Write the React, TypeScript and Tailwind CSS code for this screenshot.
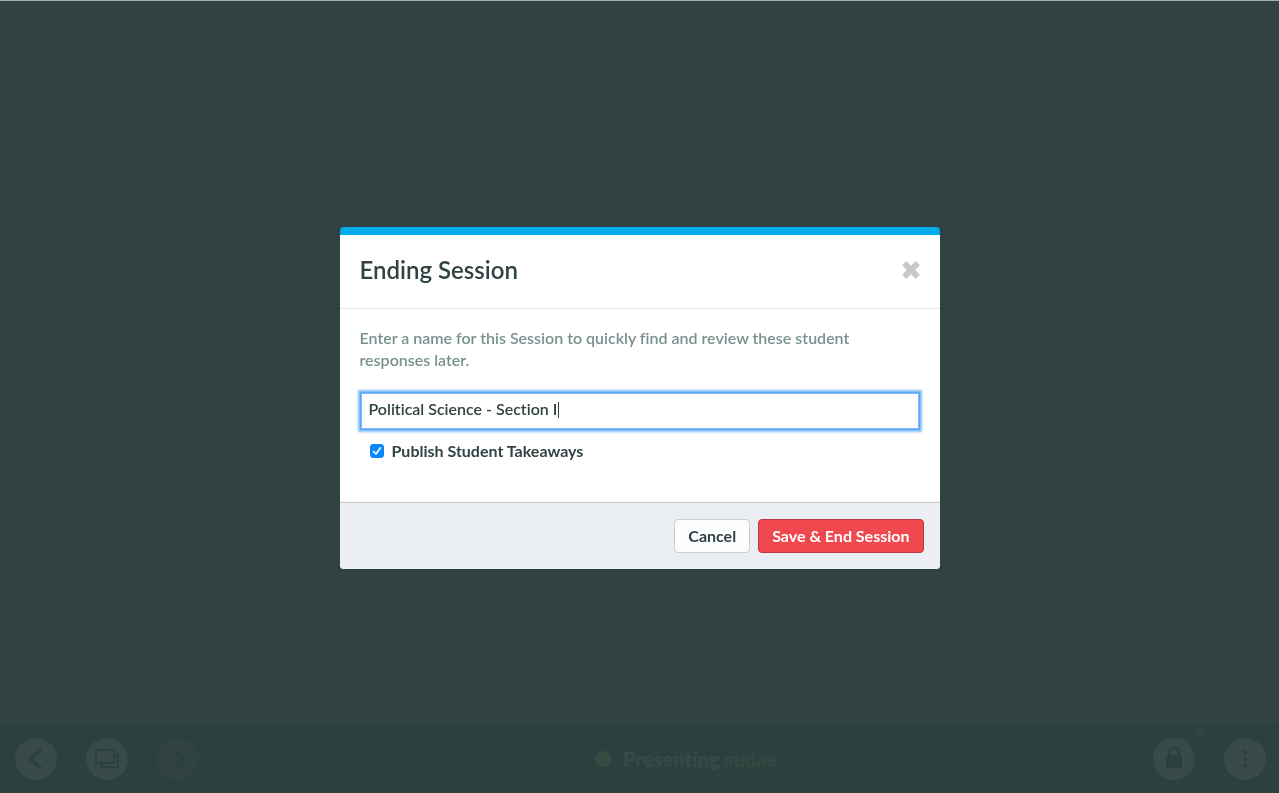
import { useState } from "react";
import type { ReactNode } from "react";

interface RoundButtonProps {
  label: string;
  disabled?: boolean;
  children: ReactNode;
}

function RoundButton({ label, disabled = false, children }: RoundButtonProps) {
  return (
    <button
      type="button"
      aria-label={label}
      disabled={disabled}
      className={`flex h-[42px] w-[42px] items-center justify-center rounded-full text-[#2d4040] ${
        disabled ? "bg-[#304242]" : "bg-[#394a4a]"
      }`}
    >
      {children}
    </button>
  );
}

function Chevron({ flip = false }: { flip?: boolean }) {
  return (
    <svg width="42" height="42" viewBox="0 0 42 42" fill="none" stroke="currentColor" strokeWidth="4" strokeLinecap="round" strokeLinejoin="round">
      <path d={flip ? "M18 12.5L27 21L18 29.5" : "M24.5 12.5L15.5 21L24.5 29.5"} />
    </svg>
  );
}

function PresenterBar() {
  return (
    <footer className="flex h-[69px] items-center justify-between bg-[#2d4040] pt-px pr-[13px] pl-[15px]">
      <div className="flex gap-[29px]">
        <RoundButton label="Previous slide">
          <Chevron />
        </RoundButton>
        <RoundButton label="All slides">
          <svg width="42" height="42" viewBox="0 0 42 42" fill="none" stroke="currentColor" strokeWidth="2">
            <rect x="10" y="12" width="18" height="13" />
            <path d="M28 17H32V29H15V25" />
          </svg>
        </RoundButton>
        <RoundButton label="Next slide" disabled>
          <Chevron flip />
        </RoundButton>
      </div>

      <div className="flex items-center gap-3 pb-px pl-5 text-xl font-extrabold text-[#374949]">
        <span className="h-4 w-4 rounded-full border-2 border-[#364a46] bg-[#374b40]" />
        <span>
          Presenting <span className="text-[#354840]">sudae</span>
        </span>
      </div>

      <div className="flex gap-[29px]">
        <div className="relative">
          <RoundButton label="Lock session">
            <svg width="42" height="42" viewBox="0 0 42 42" fill="none">
              <path d="M16 18V14.5C16 7.5 26 7.5 26 14.5V18" stroke="currentColor" strokeWidth="2.5" />
              <rect x="13" y="17" width="16" height="13" fill="currentColor" />
            </svg>
          </RoundButton>
          <svg className="absolute -top-[9px] left-[38px]" width="13" height="13" viewBox="0 0 13 13">
            <path d="M0 0H13V13Z" fill="#314343" />
          </svg>
        </div>
        <RoundButton label="More options">
          <svg width="42" height="42" viewBox="0 0 42 42" fill="currentColor">
            <circle cx="21" cy="14" r="2.3" />
            <circle cx="21" cy="21" r="2.3" />
            <circle cx="21" cy="28" r="2.3" />
          </svg>
        </RoundButton>
      </div>
    </footer>
  );
}

function EndSessionDialog() {
  const [name, setName] = useState<string>("Political Science - Section I");
  const [publish, setPublish] = useState<boolean>(true);

  return (
    <form
      role="dialog"
      aria-labelledby="dialog-title"
      className="w-full max-w-[600px] overflow-hidden rounded border-t-8 border-[#00abeb] bg-white text-base text-[#314242]"
    >
      <header className="flex items-center justify-between border-b border-[#e8e8e8] px-5 pt-[17px] pb-[21px]">
        <h1 id="dialog-title" className="text-2xl leading-[35px] font-semibold">
          Ending Session
        </h1>
        <button type="button" aria-label="Close" className="text-[#c8c8c8]">
          <svg width="18" height="18" viewBox="0 0 18 18" fill="none" stroke="currentColor" strokeWidth="6">
            <path d="M2.2 2.2L15.8 15.8M15.8 2.2L2.2 15.8" />
          </svg>
        </button>
      </header>

      <div className="px-5 pt-[18px] pb-10">
        <label htmlFor="session-name" className="block leading-[22px] font-semibold text-[#77918f]">
          Enter a name for this Session to quickly find and review these student responses later.
        </label>
        <div className="relative mt-[21px]">
          <input
            id="session-name"
            type="text"
            value={name}
            onChange={(e) => setName(e.target.value)}
            className="block h-[38px] w-full border border-[#5fa8f5] px-2 pb-[6px] font-semibold shadow-[0_0_0_1px_#8ac2fa,0_0_2px_2px_#8ac2fa,inset_0_0_0_1px_#7ab8f9] outline-none"
          />
          {/* caret */}
          <span className="pointer-events-none absolute top-[10px] left-[198px] h-4 w-px bg-[#314242]" />
        </div>
        <label className="mt-[10px] flex items-center gap-2 pl-[10px] leading-[22px] font-bold">
          <span className="relative flex h-[14px] w-[14px]">
            <input
              type="checkbox"
              checked={publish}
              onChange={(e) => setPublish(e.target.checked)}
              className="peer h-[14px] w-[14px] appearance-none rounded-[3px] border border-[#b5b5b5] checked:border-[#0a89fb] checked:bg-[#0a89fb]"
            />
            <svg
              className="pointer-events-none absolute inset-0 hidden peer-checked:block"
              width="14"
              height="14"
              viewBox="0 0 14 14"
              fill="none"
              stroke="white"
              strokeWidth="1.6"
              strokeLinecap="round"
              strokeLinejoin="round"
            >
              <path d="M3.5 7.5L6 10L10.5 3.8" />
            </svg>
          </span>
          Publish Student Takeaways
        </label>
      </div>

      <footer className="flex justify-end gap-2 border-t border-[#cacaca] bg-[#ebeef2] p-4">
        <button type="button" className="h-[34px] rounded border border-[#cccccc] bg-[#fcfdfe] px-[13px] font-bold">
          Cancel
        </button>
        <button type="button" className="h-[34px] rounded border border-[#bd3a43] bg-[#f0484f] px-[13px] font-bold text-white">
          Save &amp; End Session
        </button>
      </footer>
    </form>
  );
}

export default function App() {
  return (
    <div className="flex min-h-screen flex-col border-t border-[#a9abab] bg-[#314242] font-[Lato,'Open_Sans',sans-serif] [font-variant-ligatures:none]">
      <main className="flex-1" />
      <PresenterBar />
      <div className="fixed inset-0 flex items-center justify-center px-4 pt-[3px]">
        <EndSessionDialog />
      </div>
    </div>
  );
}
